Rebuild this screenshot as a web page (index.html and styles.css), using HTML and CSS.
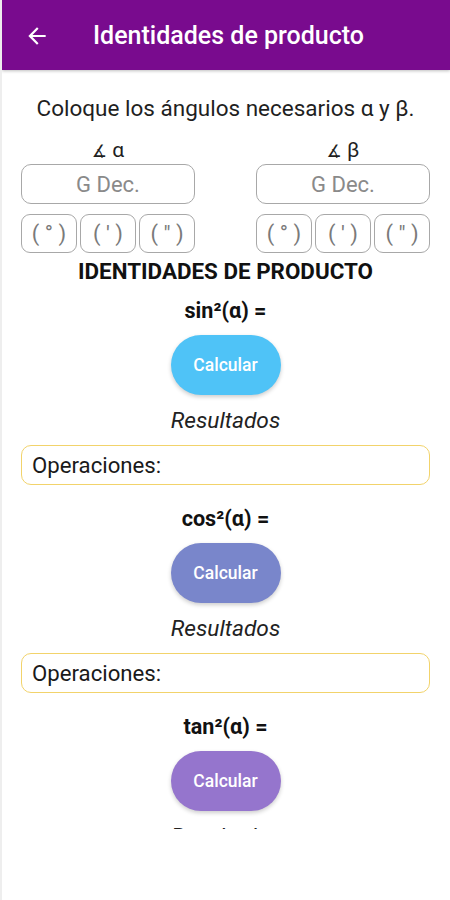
FILE: index.html
```html
<html lang="es">
<head>
  <meta charset="UTF-8">
  <meta name="viewport" content="width=device-width, initial-scale=1.0">
  <title>Identidades de producto</title>
  <link rel="stylesheet" href="styles.css">
</head>
<body>
  <div class="appbar">
    <svg class="back" viewBox="0 0 24 24" width="26" height="26">
      <path d="M20 11H7.83l5.59-5.59L12 4l-8 8 8 8 1.41-1.41L7.83 13H20v-2z" fill="#fff"/>
    </svg>
    <h1>Identidades de producto</h1>
  </div>

  <div class="scroll">
    <p class="intro">Coloque los ángulos necesarios α y β.</p>

    <div class="angles">
      <div class="angle">
        <div class="angle-label"><span class="sym">∡</span> α</div>
        <div class="field">G Dec.</div>
        <div class="dms">
          <div class="dms-box">( ° )</div>
          <div class="dms-box">( ' )</div>
          <div class="dms-box">( " )</div>
        </div>
      </div>
      <div class="angle">
        <div class="angle-label"><span class="sym">∡</span> β</div>
        <div class="field">G Dec.</div>
        <div class="dms">
          <div class="dms-box">( ° )</div>
          <div class="dms-box">( ' )</div>
          <div class="dms-box">( " )</div>
        </div>
      </div>
    </div>

    <h2>IDENTIDADES DE PRODUCTO</h2>

    <div class="identity">
      <div class="formula">sin²(α) =</div>
      <button class="calc sky">Calcular</button>
      <div class="results">Resultados</div>
      <div class="ops">Operaciones:</div>
    </div>

    <div class="identity">
      <div class="formula">cos²(α) =</div>
      <button class="calc indigo">Calcular</button>
      <div class="results">Resultados</div>
      <div class="ops">Operaciones:</div>
    </div>

    <div class="identity">
      <div class="formula">tan²(α) =</div>
      <button class="calc violet">Calcular</button>
      <div class="results">Resultados</div>
      <div class="ops">Operaciones:</div>
    </div>
  </div>
</body>
</html>
```

FILE: styles.css
```css
body {
  margin: 0;
  font-family: Roboto, "Liberation Sans", sans-serif;
  background: white;
  color: #1f1f1f;
  border-left: 2px solid #eeeeee;
  height: 900px;
  box-sizing: border-box;
}
.appbar {
  height: 70px;
  background: #790b8e;
  display: flex;
  align-items: center;
  padding-left: 22px;
  box-shadow: 0 1px 3px rgba(0, 0, 0, 0.25);
}
.back {
  margin-right: 43px;
  margin-top: 1px;
}
.appbar h1 {
  margin: 0;
  color: white;
  font-size: 25px;
  font-weight: 500;
}
.scroll {
  height: 759px;
  overflow: hidden;
  padding: 0 20px 0 19px;
}
.intro {
  margin: 26px 0 0;
  text-align: center;
  font-size: 22.5px;
  line-height: 24px;
}
.angles {
  display: grid;
  grid-template-columns: 174px 174px;
  justify-content: space-between;
  margin-top: 18px;
}
.angle-label {
  text-align: center;
  font-size: 21px;
  line-height: 24px;
}
.sym {
  font-family: "DejaVu Sans", sans-serif;
  font-size: 17px;
}
.field {
  margin-top: 1px;
  height: 40px;
  box-sizing: border-box;
  border: 1.5px solid #a8a8a8;
  border-radius: 10px;
  display: flex;
  align-items: center;
  justify-content: center;
  color: #8a8a8a;
  font-size: 22px;
}
.dms {
  display: flex;
  gap: 3px;
  margin-top: 10px;
}
.dms-box {
  flex: 1;
  height: 39px;
  box-sizing: border-box;
  border: 1.5px solid #a8a8a8;
  border-radius: 9px;
  display: flex;
  align-items: center;
  justify-content: center;
  color: #7a7a7a;
  font-size: 22px;
}
h2 {
  margin: 6px 0 0;
  text-align: center;
  font-size: 22.4px;
  line-height: 24px;
  font-weight: bold;
  color: #111;
}
.identity {
  display: flex;
  flex-direction: column;
  align-items: center;
}
.formula {
  margin-top: 16px;
  font-size: 21.6px;
  line-height: 24px;
  font-weight: bold;
  color: #111;
}
.identity + .identity .formula {
  margin-top: 22px;
}
.calc {
  margin-top: 12px;
  width: 110px;
  height: 60px;
  border: none;
  border-radius: 30px;
  color: white;
  font-family: Roboto, "Liberation Sans", sans-serif;
  font-size: 17.5px;
  font-weight: 500;
  box-shadow: 0 2px 4px rgba(0, 0, 0, 0.2);
}
.sky {
  background: #4fc3f7;
}
.indigo {
  background: #7986cb;
}
.violet {
  background: #9575cd;
}
.results {
  margin-top: 14px;
  font-size: 22.7px;
  line-height: 24px;
  font-style: italic;
  color: #222;
}
.ops {
  align-self: stretch;
  margin-top: 12px;
  height: 40px;
  box-sizing: border-box;
  border: 1.5px solid #f2d36b;
  border-radius: 10px;
  display: flex;
  align-items: center;
  padding-left: 10px;
  font-size: 22.2px;
  color: #1a1a1a;
}
```
